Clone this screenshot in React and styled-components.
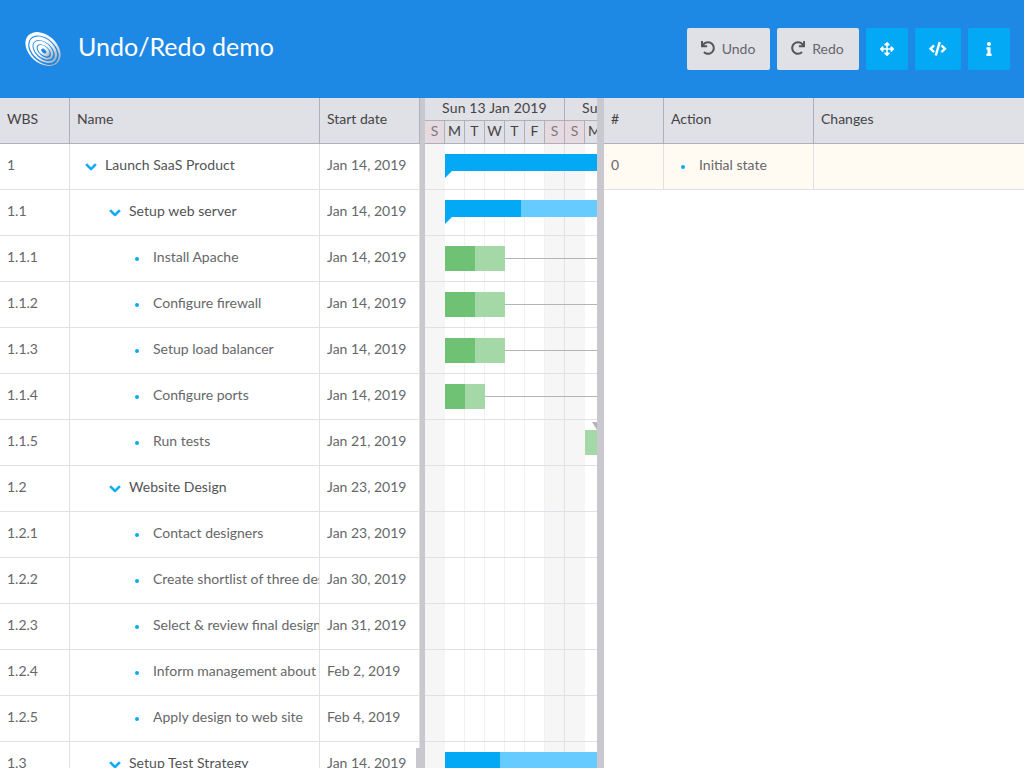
import React from "react";
import styled, { createGlobalStyle } from "styled-components";
import { FaUndo, FaRedo, FaArrowsAlt, FaCode, FaInfo, FaChevronDown } from "react-icons/fa";

const GlobalStyle = createGlobalStyle`
    html, body {
        margin: 0;
        height: 100%;
        overflow: hidden;
        font-family: "Lato", "Open Sans", sans-serif;
        font-size: 14px;
        background: #fff;
    }
    * { box-sizing: border-box; }
`

const Page = styled.div`
    display: flex;
    flex-direction: column;
    height: 768px;
    overflow: hidden;
`

const Header = styled.header`
    flex: 0 0 98px;
    display: flex;
    align-items: center;
    justify-content: space-between;
    padding: 0 14px 0 25px;
    background: #1e88e5;
`

const Brand = styled.div`
    display: flex;
    align-items: center;
    gap: 17px;
`

const Title = styled.h1`
    margin: 0 0 7px;
    font-size: 25px;
    font-weight: 400;
    color: #fff;
`

const Tools = styled.div`
    display: flex;
    gap: 7px;
`

const ToolButton = styled.button`
    display: flex;
    align-items: center;
    justify-content: center;
    gap: 7px;
    height: 42px;
    width: ${({ $w }) => $w}px;
    padding: 0 ${({ $primary }) => ($primary ? 0 : 1)}px ${({ $primary }) => ($primary ? 0 : 2)}px 0;
    border: 0;
    border-radius: 2px;
    font: inherit;
    font-size: 14px;
    color: ${({ $primary }) => ($primary ? "#fff" : "#666769")};
    background: ${({ $primary }) => ($primary ? "#03a9f4" : "#e0e0e7")};
    svg {
        font-size: ${({ $icon }) => $icon || 14}px;
        color: ${({ $primary }) => ($primary ? "#fff" : "#555")};
    }
`

const Body = styled.main`
    flex: 1;
    display: flex;
    min-height: 0;
`

const Section = styled.section`
    position: relative;
    flex: ${({ $w }) => ($w ? `0 0 ${$w}px` : "1")};
    overflow: hidden;
`

const Splitter = styled.div`
    flex: 0 0 ${({ $w }) => $w}px;
    background: #c8c8ce;
`

const SplitThumb = styled.div`
    position: absolute;
    right: 0;
    bottom: 0;
    width: 4px;
    height: 20px;
    background: #c8c8ce;
`

const HeadRow = styled.div`
    display: flex;
    height: 46px;
    background: #e0e0e7;
    border-bottom: 1px solid #b0b0b8;
`

const HeadCell = styled.div`
    flex: 0 0 ${({ $w }) => $w}px;
    ${({ $grow }) => $grow && "flex: 1;"}
    display: flex;
    align-items: center;
    padding: 0 7px 4px;
    color: #444;
    border-right: 1px solid #b0b0b8;
    ${({ $grow }) => $grow && "border-right: 0;"}
`

const Row = styled.div`
    display: flex;
    height: 46px;
    background: ${({ $tint }) => ($tint ? "#fffaf2" : "transparent")};
    border-bottom: 1px solid #e0e0e7;
`

const Cell = styled.div`
    flex: 0 0 ${({ $w }) => $w}px;
    ${({ $grow }) => $grow && "flex: 1;"}
    display: flex;
    align-items: center;
    padding: 0 7px 4px;
    overflow: hidden;
    white-space: nowrap;
    color: #666769;
    border-right: 1px solid #e0e0e7;
    ${({ $grow }) => $grow && "border-right: 0;"}
`

const TreeCell = styled(Cell)`
    padding: 0 0 4px ${({ $level }) => 14 + $level * 24}px;
    letter-spacing: ${({ $parent }) => ($parent ? "0.06px" : "0")};
    color: ${({ $parent }) => ($parent ? "#525354" : "#666769")};
`

const TreeIcon = styled.span`
    flex: 0 0 14px;
    display: flex;
    align-items: center;
    justify-content: ${({ $leaf }) => ($leaf ? "flex-start" : "center")};
    margin: 4px 7px 0 0;
    color: #03a9f4;
    font-size: 12px;
    svg {
        stroke: currentColor;
        stroke-width: 36px;
    }
`

const Dot = styled.i`
    display: block;
    width: 4px;
    height: 4px;
    margin-left: 3px;
    border-radius: 50%;
    background: #03a9f4;
`

const TimeHeader = styled.div`
    height: 46px;
    background: #e0e0e7;
    border-bottom: 1px solid #b0b0b8;
    overflow: hidden;
`

const WeekRow = styled.div`
    display: flex;
    height: 23px;
    border-bottom: 1px solid #b0b0b8;
`

const Week = styled.div`
    flex: 0 0 140px;
    display: flex;
    align-items: center;
    justify-content: center;
    padding-bottom: 4px;
    letter-spacing: 0.15px;
    white-space: nowrap;
    color: #444;
    border-right: 1px solid #b0b0b8;
`

const DayRow = styled.div`
    display: flex;
    height: 22px;
`

const Day = styled.div`
    flex: 0 0 20px;
    display: flex;
    align-items: center;
    justify-content: center;
    padding-bottom: 3px;
    color: ${({ $off }) => ($off ? "#7b787c" : "#444")};
    background: ${({ $off }) => ($off ? "#e6dae0" : "transparent")};
    border-right: 1px solid #b0b0b8;
`

const Track = styled.div`
    position: relative;
`

const Ticks = styled.div`
    position: absolute;
    top: 0;
    left: 0;
    bottom: 0;
    display: flex;
`

const Tick = styled.div`
    flex: 0 0 20px;
    height: 100%;
    background: ${({ $off }) => ($off ? "#f6f6f6" : "transparent")};
    border-right: 1px solid ${({ $week }) => ($week ? "#e0e0e7" : "#f1f1f4")};
    ${({ $off, $week }) => $off && !$week && "border-right-color: #f6f6f6;"}
`

const TaskRow = styled.div`
    position: relative;
    height: 46px;
    border-bottom: 1px solid #e0e0e7;
`

const Bar = styled.div`
    position: absolute;
    top: 10px;
    left: ${({ $left }) => $left}px;
    width: ${({ $width }) => $width}px;
    height: ${({ $parent }) => ($parent ? 17 : 25)}px;
    background: ${({ $parent }) => ($parent ? "#66cbff" : "#a5d8a7")};
    ${({ $parent }) =>
        $parent &&
        `&::after {
            content: "";
            position: absolute;
            top: 100%;
            left: 0;
            border-top: 7px solid #03a9f4;
            border-right: 7px solid transparent;
        }`}
`

const Progress = styled.div`
    height: 100%;
    width: ${({ $width }) => $width}px;
    background: ${({ $parent }) => ($parent ? "#03a9f4" : "#6fc174")};
`

const Link = styled.div`
    position: absolute;
    top: 22px;
    left: ${({ $left }) => $left}px;
    width: 400px;
    height: 1px;
    background: #b4b4b4;
`

const LinkArrow = styled.div`
    position: absolute;
    top: 2px;
    left: 167px;
    border-top: 8px solid #b4b4b4;
    border-left: 5px solid transparent;
    border-right: 5px solid transparent;
`

const BLUE = "#1e88e5";

// swirl mark: light rings cut by header-coloured ellipses, holes pushed to the lower right
const Logo = () => (
    <svg width="36" height="36" viewBox="0 0 36 36" aria-hidden="true">
        <defs>
            <linearGradient id="swirl" x1="0" y1="0" x2="1" y2="0">
                <stop offset="0" stopColor="#fff" />
                <stop offset="0.55" stopColor="#f6f8fa" />
                <stop offset="1" stopColor="#aab2ba" />
            </linearGradient>
        </defs>
        <g transform="rotate(42 18 18)">
            <ellipse cx="18" cy="18" rx="20" ry="14" fill="url(#swirl)" />
            <ellipse cx="19.2" cy="18.6" rx="17.5" ry="11.8" fill={BLUE} />
            <ellipse cx="18.6" cy="18.4" rx="16" ry="10.6" fill="url(#swirl)" />
            <ellipse cx="19.6" cy="18.8" rx="13" ry="8.2" fill={BLUE} />
            <ellipse cx="19" cy="18.6" rx="11.6" ry="7.2" fill="url(#swirl)" />
            <ellipse cx="20" cy="19" rx="8.6" ry="5" fill={BLUE} />
            <ellipse cx="19.6" cy="18.8" rx="7.2" ry="4.2" fill="url(#swirl)" />
            <ellipse cx="20" cy="19" rx="3" ry="1.8" fill={BLUE} />
        </g>
    </svg>
);

const rows = [
    { wbs: "1", name: "Launch SaaS Product", date: "Jan 14, 2019", level: 0, parent: true, bar: { left: 20, width: 600, done: 600 } },
    { wbs: "1.1", name: "Setup web server", date: "Jan 14, 2019", level: 1, parent: true, bar: { left: 20, width: 300, done: 76 } },
    { wbs: "1.1.1", name: "Install Apache", date: "Jan 14, 2019", level: 2, bar: { left: 20, width: 60, done: 30 }, link: 80 },
    { wbs: "1.1.2", name: "Configure firewall", date: "Jan 14, 2019", level: 2, bar: { left: 20, width: 60, done: 30 }, link: 80 },
    { wbs: "1.1.3", name: "Setup load balancer", date: "Jan 14, 2019", level: 2, bar: { left: 20, width: 60, done: 30 }, link: 80 },
    { wbs: "1.1.4", name: "Configure ports", date: "Jan 14, 2019", level: 2, bar: { left: 20, width: 40, done: 20 }, link: 60 },
    { wbs: "1.1.5", name: "Run tests", date: "Jan 21, 2019", level: 2, bar: { left: 160, width: 100, done: 0 }, arrow: true },
    { wbs: "1.2", name: "Website Design", date: "Jan 23, 2019", level: 1, parent: true },
    { wbs: "1.2.1", name: "Contact designers", date: "Jan 23, 2019", level: 2 },
    { wbs: "1.2.2", name: "Create shortlist of three designers", date: "Jan 30, 2019", level: 2 },
    { wbs: "1.2.3", name: "Select & review final design", date: "Jan 31, 2019", level: 2 },
    { wbs: "1.2.4", name: "Inform management about final design", date: "Feb 2, 2019", level: 2 },
    { wbs: "1.2.5", name: "Apply design to web site", date: "Feb 4, 2019", level: 2 },
    { wbs: "1.3", name: "Setup Test Strategy", date: "Jan 14, 2019", level: 1, parent: true, bar: { left: 20, width: 400, done: 55 } },
];

const days = ["S", "M", "T", "W", "T", "F", "S", "S", "M", "T", "W", "T", "F", "S"];
const isOff = (i) => i % 7 === 0 || i % 7 === 6;

const App = () => (
    <Page>
        <GlobalStyle />
        <Header>
            <Brand>
                <Logo />
                <Title>Undo/Redo demo</Title>
            </Brand>
            <Tools>
                <ToolButton $w={83}><FaUndo />Undo</ToolButton>
                <ToolButton $w={82}><FaRedo />Redo</ToolButton>
                <ToolButton $w={42} $primary><FaArrowsAlt /></ToolButton>
                <ToolButton $w={46} $primary $icon={17.5}><FaCode /></ToolButton>
                <ToolButton $w={42} $primary><FaInfo /></ToolButton>
            </Tools>
        </Header>
        <Body>
            <Section $w={420}>
                <HeadRow>
                    <HeadCell $w={70}>WBS</HeadCell>
                    <HeadCell $w={250}>Name</HeadCell>
                    <HeadCell $w={100}>Start date</HeadCell>
                </HeadRow>
                {rows.map((r) => (
                    <Row key={r.wbs}>
                        <Cell $w={70}>{r.wbs}</Cell>
                        <TreeCell $w={250} $level={r.level} $parent={r.parent}>
                            <TreeIcon $leaf={!r.parent}>
                                {r.parent ? <FaChevronDown /> : <Dot />}
                            </TreeIcon>
                            {r.name}
                        </TreeCell>
                        <Cell $w={100}>{r.date}</Cell>
                    </Row>
                ))}
                <SplitThumb />
            </Section>
            <Splitter $w={5} />
            <Section $w={172}>
                <TimeHeader>
                    <WeekRow>
                        <Week>Sun 13 Jan 2019</Week>
                        <Week>Sun 20 Jan 2019</Week>
                    </WeekRow>
                    <DayRow>
                        {days.map((d, i) => (
                            <Day key={i} $off={isOff(i)}>{d}</Day>
                        ))}
                    </DayRow>
                </TimeHeader>
                <Track>
                    <Ticks>
                        {days.map((d, i) => (
                            <Tick key={i} $off={isOff(i)} $week={i === 6} />
                        ))}
                    </Ticks>
                    {rows.map((r) => (
                        <TaskRow key={r.wbs}>
                            {r.bar && (
                                <Bar $left={r.bar.left} $width={r.bar.width} $parent={r.parent}>
                                    <Progress $width={r.bar.done} $parent={r.parent} />
                                </Bar>
                            )}
                            {r.link && <Link $left={r.link} />}
                            {r.arrow && <LinkArrow />}
                        </TaskRow>
                    ))}
                </Track>
            </Section>
            <Splitter $w={7} />
            <Section>
                <HeadRow>
                    <HeadCell $w={60}>#</HeadCell>
                    <HeadCell $w={150}>Action</HeadCell>
                    <HeadCell $grow>Changes</HeadCell>
                </HeadRow>
                <Row $tint>
                    <Cell $w={60}>0</Cell>
                    <TreeCell $w={150} $level={0}>
                        <TreeIcon $leaf><Dot /></TreeIcon>
                        Initial state
                    </TreeCell>
                    <Cell $grow />
                </Row>
            </Section>
        </Body>
    </Page>
);

export default App;
